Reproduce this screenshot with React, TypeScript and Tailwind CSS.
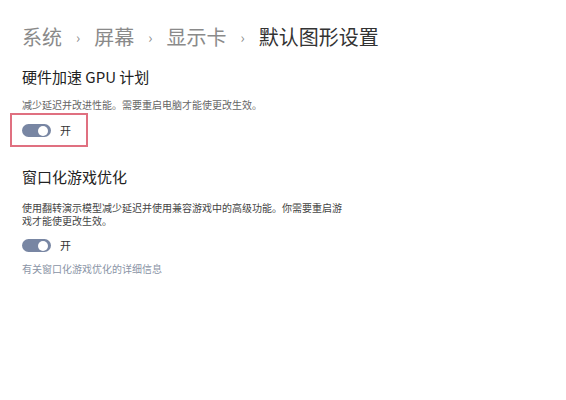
const FONT = "font-['Microsoft_YaHei','Noto_Sans_CJK_SC',sans-serif]";

function Toggle() {
  return (
    <div className="flex items-center gap-[9px]">
      <span className="flex h-[13px] w-[29px] items-center justify-end rounded-full bg-[#7886a3] pr-[3px]">
        <span className="h-[10px] w-[10px] rounded-full bg-white" />
      </span>
      <span className="text-[11px] leading-none text-[#333]">开</span>
    </div>
  );
}

const CRUMBS = ["系统", "屏幕", "显示卡"];

export default function App() {
  return (
    <div className={`${FONT} h-[400px] w-[566px] bg-white px-[22px] pt-[24px]`}>
      <div className="flex items-center text-[20px] leading-[26px] text-[#8a8a8a]">
        {CRUMBS.map((c) => (
          <span key={c} className="flex items-center">
            <span>{c}</span>
            <span className="mx-[14px] text-[14px]">›</span>
          </span>
        ))}
        <span className="text-[#333]">默认图形设置</span>
      </div>

      <h2 className="mt-[17px] text-[15px] leading-[20px] text-[#222]">硬件加速 GPU 计划</h2>
      <p className="mt-[11px] text-[10px] leading-[14px] text-[#666]">
        减少延迟并改进性能。需要重启电脑才能使更改生效。
      </p>
      <div className="-ml-[12px] mt-[1px] w-[78px] border-2 border-[#e07080] pb-[8px] pl-[10px] pt-[9px]">
        <Toggle />
      </div>

      <h2 className="mt-[20px] text-[15px] leading-[20px] text-[#222]">窗口化游戏优化</h2>
      <p className="mt-[14px] w-[326px] text-[10px] leading-[13px] text-[#444]">
        使用翻转演示模型减少延迟并使用兼容游戏中的高级功能。你需要重启游戏才能使更改生效。
      </p>
      <div className="mt-[12px]">
        <Toggle />
      </div>
      <p className="mt-[10px] text-[10px] leading-[14px] text-[#8a94a6]">有关窗口化游戏优化的详细信息</p>
    </div>
  );
}
